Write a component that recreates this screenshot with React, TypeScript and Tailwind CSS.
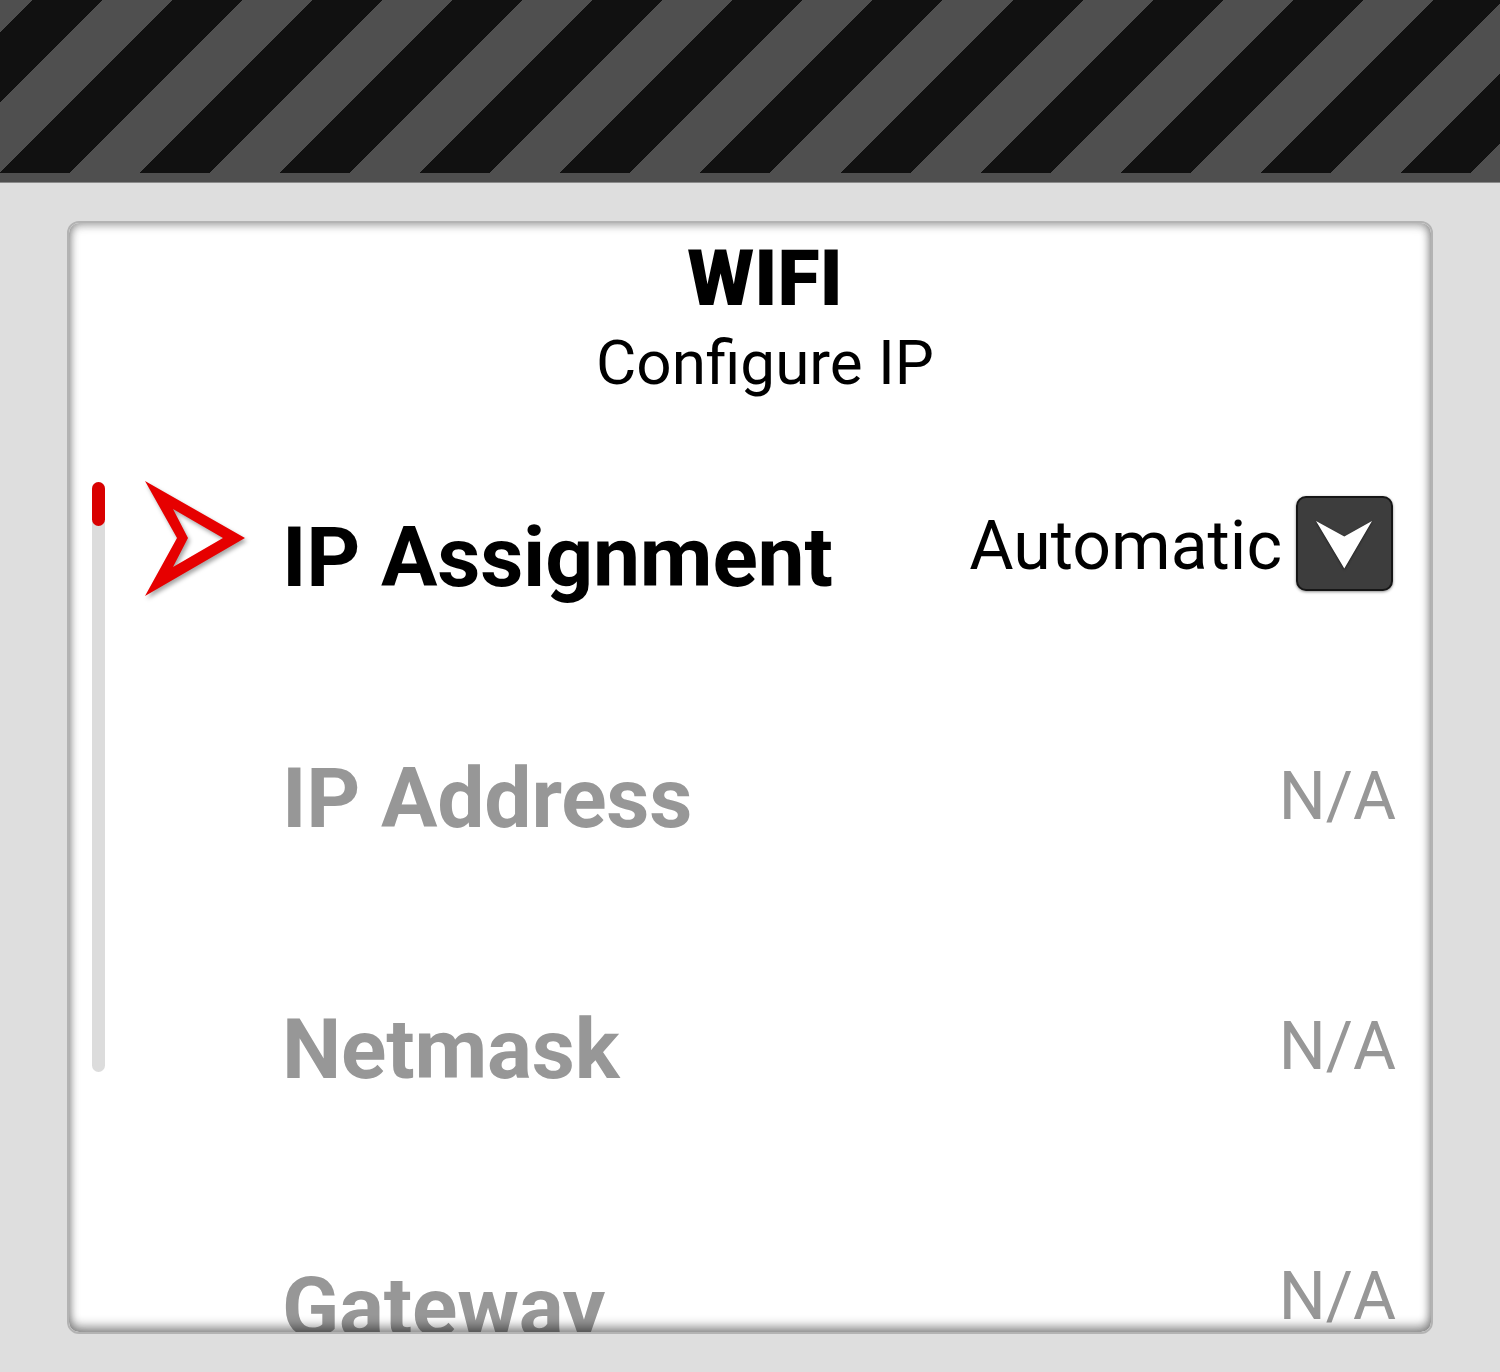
import React from 'react';

const rows = [
  { label: 'IP Address', value: 'N/A', labelShift: 'mt-0' },
  { label: 'Netmask', value: 'N/A', labelShift: 'mt-[2px]' },
  { label: 'Gateway', value: 'N/A', labelShift: 'mt-[18px]' },
];

function RedPointer() {
  return (
    <svg width="110" height="130" viewBox="0 0 110 130" className="drop-shadow-[2px_3px_2px_rgba(0,0,0,0.35)]">
      <path
        fillRule="evenodd"
        fill="#e60000"
        d="M5 7 L105 64 L5 122 L37 64 Z M33 35 L48 64 L33 93 L83 64 Z"
      />
    </svg>
  );
}

function DropdownButton() {
  return (
    <div className="w-[97px] h-[95px] rounded-[10px] border-2 border-[#161616] bg-[#3d3d3d] shadow-[0_1px_3px_rgba(0,0,0,0.45)]">
      <svg viewBox="0 0 93 91" className="w-full h-full drop-shadow-[0_1px_1px_rgba(0,0,0,0.5)]">
        <path fill="#ffffff" d="M18 23 L46.3 38.6 L74 23 L46.3 70.6 Z" />
      </svg>
    </div>
  );
}

export default function App() {
  return (
    <div className="w-[1500px] h-[1372px] bg-[#dedede] flex flex-col font-['Roboto',sans-serif] overflow-hidden">
      {/* Hazard stripe header */}
      <header className="shrink-0">
        <div className="h-[173px] bg-[repeating-linear-gradient(135deg,#4f4f4f_0px,#4f4f4f_23.3px,#111111_23.3px,#111111_72.8px,#4f4f4f_72.8px,#4f4f4f_99px)]"></div>
        <div className="h-[10px] bg-[#4f4f4f] border-b border-[#8a8a8a]"></div>
      </header>

      <main className="flex-1 min-h-0 px-[67px] pt-[38px] pb-[38px]">
        <div className="relative h-full rounded-[12px] border-2 border-[#b3b3b3] bg-white overflow-hidden">
          {/* Title */}
          <div className="pt-[18px] pl-[30px] text-center text-black">
            <div className="text-[77px] leading-[77px] font-black">WIFI</div>
            <div className="mt-[14px] text-[62px] leading-[62px] font-normal">Configure IP</div>
          </div>

          {/* List */}
          <div className="mt-[30px] flex">
            <div className="ml-[23px] w-[13px] pt-[58px] shrink-0">
              <div className="h-[590px] w-[13px] rounded-full bg-[#dcdcdc]">
                <div className="h-[44px] w-[13px] rounded-full bg-[#d90000]"></div>
              </div>
            </div>

            <div className="flex-1 pr-[35px]">
              <div className="h-[250px] flex items-center">
                <div className="ml-[35px] mr-[32px] -mt-[20px] shrink-0">
                  <RedPointer />
                </div>
                <div className="mt-[18px] text-[84px] leading-[84px] font-bold text-black tracking-[-0.2px]">IP Assignment</div>
                <div className="ml-auto -mt-[6px] text-[68px] leading-[68px] text-black">Automatic</div>
                <div className="ml-[14px] mr-[3px] -mt-[12px]">
                  <DropdownButton />
                </div>
              </div>

              {rows.map((row) => (
                <div key={row.label} className="h-[250px] flex items-center">
                  <div className={`ml-[177px] ${row.labelShift} text-[84px] leading-[84px] font-bold text-[#979797] tracking-[-0.2px]`}>{row.label}</div>
                  <div className="ml-auto -mt-[5px] text-[66px] leading-[66px] text-[#979797]">{row.value}</div>
                </div>
              ))}
            </div>
          </div>

          {/* Inset bevel over the content */}
          <div className="pointer-events-none absolute inset-0 rounded-[10px] shadow-[inset_0_4px_8px_rgba(0,0,0,0.18),inset_0_-7px_10px_rgba(0,0,0,0.32),inset_4px_0_8px_rgba(0,0,0,0.12),inset_-4px_0_8px_rgba(0,0,0,0.14)]"></div>
        </div>
      </main>
    </div>
  );
}
